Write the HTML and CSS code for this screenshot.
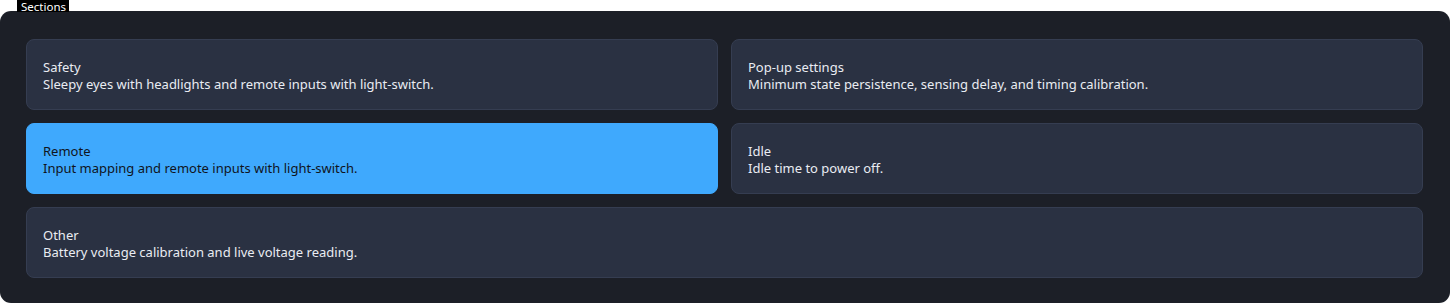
FILE: index.html
```html
<!DOCTYPE html>
<html>
<head>
<meta charset="utf-8">
<link rel="stylesheet" href="styles.css">
</head>
<body>
<fieldset class="panel">
  <legend class="legend">Sections</legend>
  <div class="grid">
    <div class="card">
      <div class="title">Safety</div>
      <div class="desc">Sleepy eyes with headlights and remote inputs with light-switch.</div>
    </div>
    <div class="card">
      <div class="title">Pop-up settings</div>
      <div class="desc">Minimum state persistence, sensing delay, and timing calibration.</div>
    </div>
    <div class="card active">
      <div class="title">Remote</div>
      <div class="desc">Input mapping and remote inputs with light-switch.</div>
    </div>
    <div class="card">
      <div class="title">Idle</div>
      <div class="desc">Idle time to power off.</div>
    </div>
    <div class="card wide">
      <div class="title">Other</div>
      <div class="desc">Battery voltage calibration and live voltage reading.</div>
    </div>
  </div>
</fieldset>
</body>
</html>
```

FILE: styles.css
```css
html, body {
  margin: 0;
  padding: 0;
  background: #ffffff;
}
body {
  font-family: "Noto Sans", "Open Sans", sans-serif;
  width: 1450px;
  height: 303px;
  overflow: hidden;
}
.panel {
  margin: 0;
  margin-top: 11px;
  width: 1450px;
  height: 292px;
  box-sizing: border-box;
  background: #1c1f27;
  border: none;
  border-radius: 11px;
  padding: 28px 27px 24px 26px;
  position: relative;
  min-width: 0;
}
.legend {
  position: absolute;
  top: -11px;
  left: 17px;
  background: #000000;
  color: #ffffff;
  font-size: 11.5px;
  line-height: 13px;
  padding: 0 3px 0 4px;
  height: 12px;
}
.grid {
  display: grid;
  grid-template-columns: 1fr 1fr;
  column-gap: 13px;
  row-gap: 13px;
}
.card {
  height: 71px;
  box-sizing: border-box;
  background: #2a3142;
  border: 1px solid #353d51;
  border-radius: 8px;
  padding: 2px 16px 0 16px;
  display: flex;
  flex-direction: column;
  justify-content: center;
  color: #e9ecf2;
  font-size: 13px;
  line-height: 17px;
}
.card.active {
  background: #3fa9fd;
  border-color: #3fa9fd;
  color: #10141c;
}
.card.wide {
  grid-column: 1 / span 2;
}
```
